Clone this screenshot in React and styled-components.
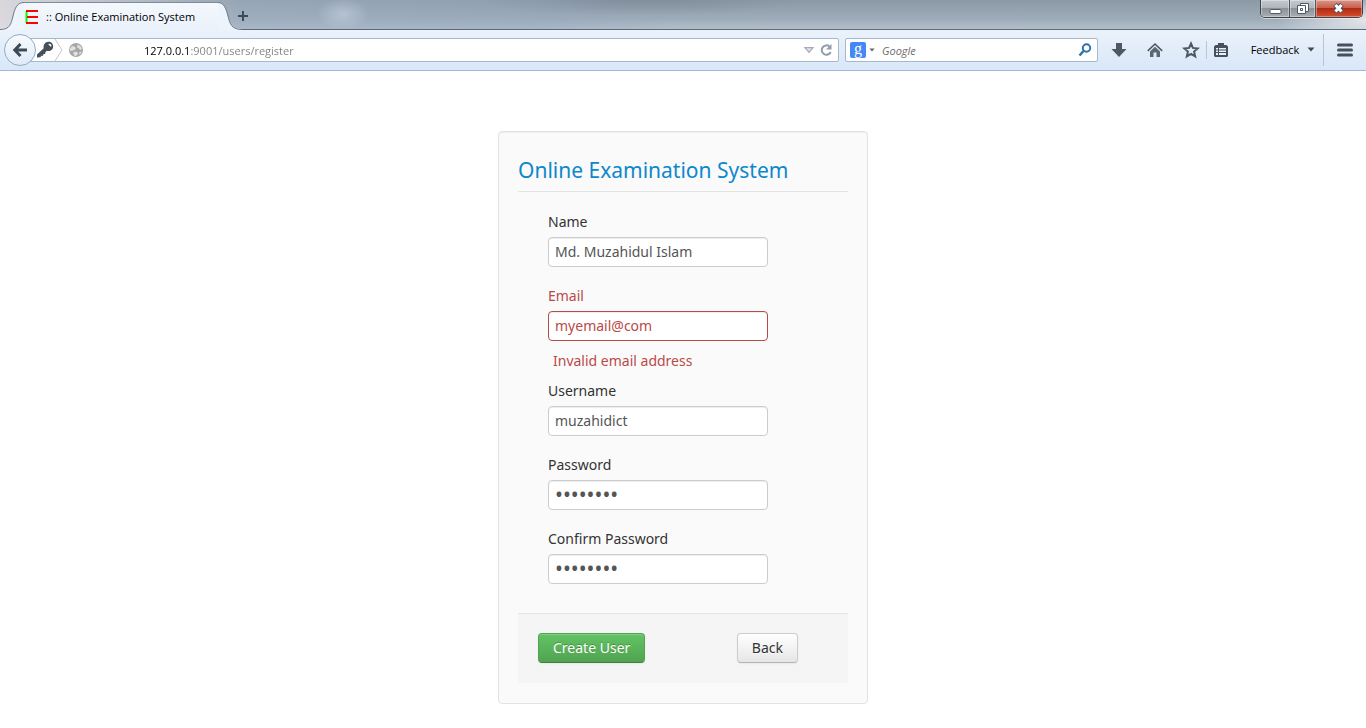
import React from "react";
import styled, { createGlobalStyle } from "styled-components";

const GlobalStyle = createGlobalStyle`
  *, *::before, *::after { box-sizing: border-box; }
  body {
    margin: 0;
    background: #fff;
    color: #333;
    font: 14px/20px "Noto Sans", "Open Sans", sans-serif;
  }
  button, input { font: inherit; }
`;

/* ---------- browser window ---------- */

const Chrome = styled.header`
  font: 11px/16px "Open Sans", "Noto Sans", sans-serif;
  color: #000;
`;

const TabStrip = styled.div`
  display: flex;
  align-items: flex-start;
  height: 30px;
  border-bottom: 1px solid #5c6a77;
  background:
    radial-gradient(ellipse 26px 16px at 343px 14px, rgba(205, 218, 232, 0.5), transparent),
    radial-gradient(ellipse 90px 26px at 1366px 20px, rgba(235, 235, 238, 0.9), transparent),
    radial-gradient(ellipse 160px 16px at 640px 0, rgba(115, 125, 138, 0.45), transparent),
    linear-gradient(90deg, rgba(226, 222, 226, 0.9) 0, rgba(160, 176, 195, 0.5) 240px, rgba(150, 168, 192, 0.4) 540px, transparent 680px),
    linear-gradient(#8c99a5, #9eacb9 65%, #b2bfcb);
`;

const Tab = styled.div`
  display: flex;
  height: 30px;
  margin-bottom: -1px;
`;

const TabEdge = styled.svg`
  display: block;
  flex: none;
`;

const TabBody = styled.div`
  display: flex;
  align-items: center;
  gap: 7px;
  width: 194px;
  height: 28px;
  margin-top: 2px;
  padding-left: 1px;
  border-top: 1px solid #7d8c9b;
  background: linear-gradient(#f4f8fd, #eaf1fb);
  white-space: nowrap;
`;

const ChromeButton = styled.button`
  display: flex;
  align-items: center;
  justify-content: center;
  flex: none;
  width: ${(p) => p.$width || 20}px;
  height: ${(p) => p.$height || 24}px;
  padding: 0;
  border: 0;
  background: none;
  color: inherit;
  svg { flex: none; }
`;

const NewTab = styled(ChromeButton)`
  margin-top: 4px;
  margin-left: -8px;
`;

const WindowControls = styled.div`
  display: flex;
  height: 18px;
  margin-left: auto;
  margin-right: 3px;
  border: 1px solid #3e444b;
  border-top: 0;
  border-radius: 0 0 5px 5px;
  overflow: hidden;
  box-shadow: 0 1px 0 rgba(255, 255, 255, 0.5);
`;

const WindowButton = styled.button`
  display: flex;
  align-items: center;
  justify-content: center;
  width: ${(p) => p.$width}px;
  padding: 0;
  border: 0;
  border-left: ${(p) => (p.$first ? "0" : "1px solid #4f555c")};
  box-shadow: inset 0 0 0 1px rgba(255, 255, 255, 0.35);
  background: ${(p) =>
    p.$close
      ? "linear-gradient(#d9988b, #c9604c 45%, #b22a14 50%, #d4512f)"
      : "linear-gradient(#c5c9cf, #b0b5bc 45%, #8c929a 50%, #a9aeb5)"};
  svg { flex: none; }
`;

const Toolbar = styled.div`
  display: flex;
  align-items: center;
  height: 41px;
  padding: 0 0 1px 4px;
  border-bottom: 1px solid #a3b9d1;
  background: linear-gradient(#ebf2fb, #d9e7f8);
`;

const BackButton = styled.button`
  display: flex;
  align-items: center;
  justify-content: center;
  flex: none;
  z-index: 1;
  width: 32px;
  height: 32px;
  padding: 0;
  border: 1px solid #92abc4;
  border-radius: 50%;
  background: linear-gradient(#f7fafe, #dfebf9);
`;

const AddressBar = styled.div`
  display: flex;
  align-items: center;
  flex: 1;
  height: 24px;
  margin-left: -12px;
  padding: 0 4px 0 11px;
  border: 1px solid #a5b8cc;
  border-radius: 2px;
  background: #fff;
`;

const AddressInput = styled.input`
  flex: 1;
  min-width: 0;
  margin-left: 55px;
  padding: 2px 0 0;
  border: 0;
  outline: 0;
  color: transparent;
  background: linear-gradient(90deg, #000 46px, #808080 46px);
  background-clip: text;
  -webkit-background-clip: text;
`;

const SearchBar = styled.div`
  display: flex;
  align-items: center;
  flex: none;
  width: 253px;
  height: 24px;
  margin-left: 6px;
  padding: 0 4px;
  border: 1px solid #a5b8cc;
  border-radius: 2px;
  background: #fff;
`;

const SearchInput = styled.input`
  flex: 1;
  min-width: 0;
  padding: 2px 0 0 4px;
  border: 0;
  outline: 0;
  background: none;
  &::placeholder {
    color: #6d6d6d;
    font-style: italic;
    opacity: 1;
  }
`;

const EngineLogo = styled.span`
  display: flex;
  justify-content: center;
  width: 16px;
  height: 16px;
  border-radius: 2px;
  background: #4587f4;
  color: #fff;
  font: 16px/13px "Liberation Serif", serif;
`;

const Actions = styled.div`
  display: flex;
  align-items: center;
  margin-left: 11px;
  color: #44505c;
`;

const Separator = styled.span`
  width: 1px;
  height: ${(p) => p.$height}px;
  margin-left: ${(p) => p.$gap || 0}px;
  background: #b4c6da;
`;

const FeedbackButton = styled(ChromeButton)`
  gap: 8px;
  padding-left: 8px;
  color: #000;
`;

/* ---------- register page ---------- */

const Page = styled.main`
  display: flex;
  justify-content: center;
  padding: 60px 20px 24px;
`;

const Card = styled.form`
  width: 370px;
  padding: 19px 19px 20px;
  border: 1px solid #e3e3e3;
  border-radius: 4px;
  background: #fafafa;
  box-shadow: inset 0 1px 1px rgba(0, 0, 0, 0.05);
`;

const Title = styled.h1`
  margin: 0;
  height: 41px;
  border-bottom: 1px solid #e3e3e3;
  color: #0d88cc;
  font-size: 21px;
  font-weight: 400;
  line-height: 38px;
`;

const Fields = styled.div`
  padding: 20px 30px 10px;
`;

const Field = styled.div`
  margin-bottom: ${(p) => (p.$error ? 10 : 19)}px;
  color: ${(p) => (p.$error ? "#b94a48" : "#333")};
`;

const Label = styled.label`
  display: block;
  margin-bottom: 5px;
`;

const TextInput = styled.input`
  display: block;
  width: 220px;
  height: 30px;
  padding: 3px 6px 5px;
  border: 1px solid ${(p) => (p.$error ? "#b94a48" : "#ccc")};
  border-radius: 4px;
  outline: 0;
  background: #fff;
  color: ${(p) => (p.$error ? "#b94a48" : "#555")};
  box-shadow: inset 0 1px 1px rgba(0, 0, 0, 0.075);
  &[type="password"] { font-size: 21px; }
`;

const ErrorText = styled.p`
  margin: 10px 0 0;
  padding-left: 5px;
`;

const FormActions = styled.div`
  display: flex;
  justify-content: space-between;
  padding: 19px 50px 20px 20px;
  border-top: 1px solid #e5e5e5;
  background: #f5f5f5;
`;

const Button = styled.button`
  height: 30px;
  padding: 0 14px;
  border: 1px solid;
  border-radius: 4px;
  border-color: ${(p) => (p.$primary ? "#51a351 #51a351 #3f8240" : "#ccc #ccc #b3b3b3")};
  background: ${(p) =>
    p.$primary ? "linear-gradient(#62c462, #51a351)" : "linear-gradient(#fff, #e6e6e6)"};
  color: ${(p) => (p.$primary ? "#fff" : "#333")};
  text-shadow: ${(p) =>
    p.$primary ? "0 -1px 0 rgba(0, 0, 0, 0.25)" : "0 1px 1px rgba(255, 255, 255, 0.75)"};
  box-shadow: inset 0 1px 0 rgba(255, 255, 255, 0.2), 0 1px 2px rgba(0, 0, 0, 0.05);
`;

/* ---------- icons ---------- */

const Favicon = () => (
  <svg width="14" height="16" viewBox="0 0 14 16" aria-hidden="true">
    <path d="M1.5 2v12" stroke="#0f0" strokeWidth="2" />
    <path d="M1 2h12M2 8h11M1 14h12" stroke="#f00" strokeWidth="2" />
  </svg>
);

const BackIcon = () => (
  <svg width="16" height="16" viewBox="0 0 16 16" fill="none" stroke="#3d4b57" strokeWidth="3" aria-hidden="true">
    <path d="M8.5 2 2.8 8l5.7 6M3 8h12" />
  </svg>
);

const KeyIcon = () => (
  <svg width="18" height="18" viewBox="0 0 18 18" fill="#45505b" aria-hidden="true">
    <path
      fillRule="evenodd"
      d="M9.2 2C11 .4 14.2.4 16 2.2c1.7 1.9 1.5 5-.2 6.6-1.4 1.3-3.3 1.6-4.9 1L9.4 11.300l-.3 1.600-1.700.1-.3 1.700-1.700.1L4.300 16.200 1 16.500v-3l6.700-6.200C7.200 5.500 7.700 3.400 9.200 2Zm3.100 1.200 2.700 2.700c.8-1 .5-2-.2-2.600-.7-.7-1.700-.9-2.500-.1Z"
    />
  </svg>
);

const ChevronEdge = () => (
  <svg width="9" height="22" viewBox="0 0 9 22" fill="none" stroke="#c3c9ce" aria-hidden="true">
    <path d="m1 0 7 11-7 11" />
  </svg>
);

const GlobeIcon = () => (
  <svg width="16" height="16" viewBox="0 0 16 16" aria-hidden="true">
    <circle cx="8" cy="8" r="7" fill="#a6a6a6" />
    <path d="M2 6.500 4 4l2.500.5L8 6 6.500 8l-2 .5L2 9ZM9.500 2.500l3 1.500 1.500 3-2 1-1.500-2-1.500-.5ZM5 10.500l3-1 2 1.500-1 2.500-2.500.5ZM11.500 10l2-.5-1 2.500-1.500.5Z" fill="#e0e0e0" />
  </svg>
);

const ReloadIcon = () => (
  <svg width="14" height="14" viewBox="0 0 14 14" aria-hidden="true">
    <path d="M10.500 3.500A4.700 4.700 0 1 0 11.700 9" fill="none" stroke="#919eac" strokeWidth="2" />
    <path d="M12.500 1v5.500H7Z" fill="#919eac" />
  </svg>
);

const SearchIcon = () => (
  <svg width="14" height="14" viewBox="0 0 14 14" fill="none" stroke="#2d72ac" aria-hidden="true">
    <circle cx="8.500" cy="5" r="3.700" strokeWidth="2" />
    <path d="M5.500 8 1.500 12.500" strokeWidth="2.500" />
  </svg>
);

const Triangle = ({ width = 8, fill = "#3f4a54", stroke = "none" }) => (
  <svg width={width} height={width / 2 + 1} viewBox="0 0 8 5" fill={fill} stroke={stroke} aria-hidden="true">
    <path d="M.5.5h7L4 4.500Z" />
  </svg>
);

const DownloadIcon = () => (
  <svg width="16" height="16" viewBox="0 0 16 16" fill="#4d5863" aria-hidden="true">
    <path d="M5 1h6v6h4.500L8 15 .5 7H5Z" />
  </svg>
);

const HomeIcon = () => (
  <svg width="16" height="16" viewBox="0 0 16 16" aria-hidden="true">
    <path d="M.8 8.800 8 2l7.200 6.800" fill="none" stroke="#4d5863" strokeWidth="1.600" />
    <path d="m8 4.800 5 4.600V15H9.500v-4.500h-3V15H3V9.400Z" fill="#5b6671" />
  </svg>
);

const StarIcon = () => (
  <svg width="18" height="18" viewBox="0 0 18 18" fill="none" stroke="#4d5863" strokeWidth="2" aria-hidden="true">
    <path d="m9 2.500 1.900 4.400 4.800.5-3.600 3.200 1.100 4.800L9 12.900l-4.200 2.500 1.100-4.800-3.600-3.200 4.800-.5Z" />
  </svg>
);

const ListIcon = () => (
  <svg width="16" height="16" viewBox="0 0 16 16" aria-hidden="true">
    <path d="M5 1h6v2h2.500L15 4.500V14l-1 1H2l-1-1V4.500L2.500 3H5Z" fill="#46515c" />
    <path d="M3 6h2v1.500H3ZM6 6h7v1.500H6ZM3 8.500h2V10H3ZM6 8.500h7V10H6ZM3 11h2v2H3ZM6 11h7v2H6Z" fill="#e6effa" />
  </svg>
);

const MenuIcon = () => (
  <svg width="16" height="14" viewBox="0 0 16 14" stroke="#46515c" strokeWidth="3" strokeLinecap="round" aria-hidden="true">
    <path d="M1.500 2h13M1.500 7h13M1.500 12h13" />
  </svg>
);

const PlusIcon = () => (
  <svg width="12" height="12" viewBox="0 0 12 12" stroke="#3f4a54" strokeWidth="2" aria-hidden="true">
    <path d="M6 1v10M1 6h10" />
  </svg>
);

const MinimizeIcon = () => (
  <svg width="13" height="16" viewBox="0 0 13 16" aria-hidden="true">
    <rect x="1" y="8.500" width="11" height="4" rx="1" fill="#fff" stroke="#535866" />
  </svg>
);

const RestoreIcon = () => (
  <svg width="14" height="16" viewBox="0 0 14 16" fill="#fff" stroke="#535866" aria-hidden="true">
    <path d="M4.500 2.500h8v8h-8Z" />
    <path fillRule="evenodd" d="M1.500 4.500h8v8h-8ZM4.500 7.500v2h2v-2Z" />
  </svg>
);

const CloseIcon = () => (
  <svg width="14" height="14" viewBox="0 0 14 14" aria-hidden="true">
    <path d="m3 2.500 7 7.500M10 2.500 3 10" stroke="#535866" strokeWidth="5" />
    <path d="m3.500 3 6 6.500M9.500 3l-6 6.500" stroke="#fff" strokeWidth="3" />
  </svg>
);

const fields = [
  { id: "name", label: "Name", value: "Md. Muzahidul Islam" },
  { id: "email", label: "Email", value: "myemail@com", error: "Invalid email address" },
  { id: "username", label: "Username", value: "muzahidict" },
  { id: "password", label: "Password", value: "password", type: "password" },
  { id: "confirm", label: "Confirm Password", value: "password", type: "password" },
];

function BrowserChrome() {
  return (
    <Chrome>
      <TabStrip>
        <Tab>
          <TabEdge width="24" height="30" viewBox="0 0 24 30" aria-hidden="true">
            <path d="M0 30v-1C10 29 11 24 13 16S17 2.500 24 2.500V30Z" fill="#eef4fc" />
            <path d="M0 29.500C10 29.500 11 24 13 16S17 2.500 24 2.500" fill="none" stroke="#6b7986" />
          </TabEdge>
          <TabBody>
            <Favicon />
            <span>:: Online Examination System</span>
          </TabBody>
          <TabEdge width="24" height="30" viewBox="0 0 24 30" aria-hidden="true">
            <path d="M0 2.500c6 0 8 6 10 13.500S13 29 24 29v1H0Z" fill="#eef4fc" />
            <path d="M0 2.500c6 0 8 6 10 13.500S13 29.500 24 29.500" fill="none" stroke="#6b7986" />
          </TabEdge>
        </Tab>
        <NewTab type="button" aria-label="New tab" $width={18}>
          <PlusIcon />
        </NewTab>
        <WindowControls>
          <WindowButton type="button" aria-label="Minimize" $width={28} $first>
            <MinimizeIcon />
          </WindowButton>
          <WindowButton type="button" aria-label="Restore" $width={26}>
            <RestoreIcon />
          </WindowButton>
          <WindowButton type="button" aria-label="Close" $width={47} $close>
            <CloseIcon />
          </WindowButton>
        </WindowControls>
      </TabStrip>
      <Toolbar>
        <BackButton type="button" aria-label="Back one page">
          <BackIcon />
        </BackButton>
        <AddressBar>
          <KeyIcon />
          <ChevronEdge />
          <ChromeButton type="button" aria-label="Site identity" $width={26} $height={22}>
            <GlobeIcon />
          </ChromeButton>
          <AddressInput aria-label="Address" defaultValue="127.0.0.1:9001/users/register" />
          <ChromeButton type="button" aria-label="History" $width={18} $height={22}>
            <Triangle width={10} fill="#dde2e8" stroke="#a3adb8" />
          </ChromeButton>
          <ChromeButton type="button" aria-label="Reload" $width={16} $height={22}>
            <ReloadIcon />
          </ChromeButton>
        </AddressBar>
        <SearchBar>
          <EngineLogo aria-hidden="true">g</EngineLogo>
          <ChromeButton type="button" aria-label="Search engine" $width={12} $height={22}>
            <Triangle width={6} fill="#666" />
          </ChromeButton>
          <SearchInput aria-label="Search" placeholder="Google" />
          <ChromeButton type="button" aria-label="Go" $width={16} $height={22}>
            <SearchIcon />
          </ChromeButton>
        </SearchBar>
        <Actions>
          <ChromeButton type="button" aria-label="Downloads"><DownloadIcon /></ChromeButton>
          <ChromeButton type="button" aria-label="Home" $width={52}><HomeIcon /></ChromeButton>
          <ChromeButton type="button" aria-label="Bookmark"><StarIcon /></ChromeButton>
          <Separator $height={18} $gap={5} />
          <ChromeButton type="button" aria-label="Bookmarks list" $width={28}><ListIcon /></ChromeButton>
          <FeedbackButton type="button" $width={88}>
            Feedback <Triangle />
          </FeedbackButton>
          <Separator $height={32} />
          <ChromeButton type="button" aria-label="Menu" $width={42}><MenuIcon /></ChromeButton>
        </Actions>
      </Toolbar>
    </Chrome>
  );
}

export default function App() {
  return (
    <>
      <GlobalStyle />
      <BrowserChrome />
      <Page>
        <Card onSubmit={(e) => e.preventDefault()} noValidate>
          <Title>Online Examination System</Title>
          <Fields>
            {fields.map((f) => (
              <Field key={f.id} $error={f.error}>
                <Label htmlFor={f.id}>{f.label}</Label>
                <TextInput id={f.id} type={f.type || "text"} defaultValue={f.value} $error={f.error} />
                {f.error && <ErrorText>{f.error}</ErrorText>}
              </Field>
            ))}
          </Fields>
          <FormActions>
            <Button type="submit" $primary>Create User</Button>
            <Button type="button">Back</Button>
          </FormActions>
        </Card>
      </Page>
    </>
  );
}
